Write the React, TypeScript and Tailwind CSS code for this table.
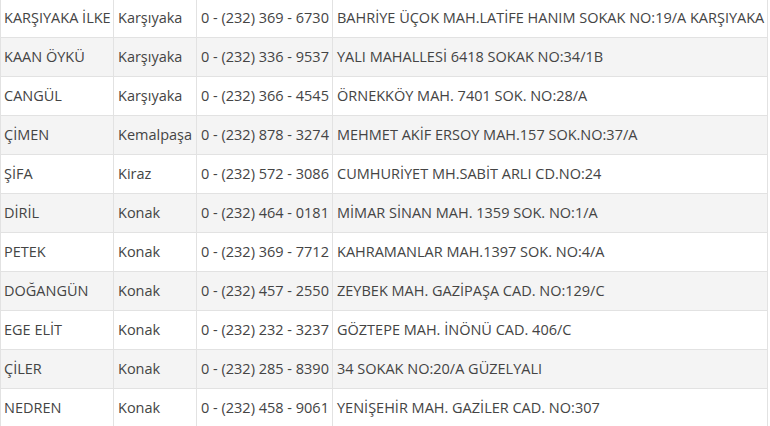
const rows = [
  ["KARŞIYAKA İLKE", "Karşıyaka", "0 - (232) 369 - 6730", "BAHRİYE ÜÇOK MAH.LATİFE HANIM SOKAK NO:19/A KARŞIYAKA"],
  ["KAAN ÖYKÜ", "Karşıyaka", "0 - (232) 336 - 9537", "YALI MAHALLESİ 6418 SOKAK NO:34/1B"],
  ["CANGÜL", "Karşıyaka", "0 - (232) 366 - 4545", "ÖRNEKKÖY MAH. 7401 SOK. NO:28/A"],
  ["ÇİMEN", "Kemalpaşa", "0 - (232) 878 - 3274", "MEHMET AKİF ERSOY MAH.157 SOK.NO:37/A"],
  ["ŞİFA", "Kiraz", "0 - (232) 572 - 3086", "CUMHURİYET MH.SABİT ARLI CD.NO:24"],
  ["DİRİL", "Konak", "0 - (232) 464 - 0181", "MİMAR SİNAN MAH. 1359 SOK. NO:1/A"],
  ["PETEK", "Konak", "0 - (232) 369 - 7712", "KAHRAMANLAR MAH.1397 SOK. NO:4/A"],
  ["DOĞANGÜN", "Konak", "0 - (232) 457 - 2550", "ZEYBEK MAH. GAZİPAŞA CAD. NO:129/C"],
  ["EGE ELİT", "Konak", "0 - (232) 232 - 3237", "GÖZTEPE MAH. İNÖNÜ CAD. 406/C"],
  ["ÇİLER", "Konak", "0 - (232) 285 - 8390", "34 SOKAK NO:20/A GÜZELYALI"],
  ["NEDREN", "Konak", "0 - (232) 458 - 9061", "YENİŞEHİR MAH. GAZİLER CAD. NO:307"],
];

export default function App() {
  return (
    <div className="w-[770px] h-[426px] overflow-hidden bg-white">
      <table
        className="-mt-[2px] w-[768px] table-fixed border-collapse text-[14.5px] text-[#444]"
        style={{ fontFamily: '"Open Sans", "Noto Sans", sans-serif' }}
      >
        <colgroup>
          <col className="w-[113px]" />
          <col className="w-[83px]" />
          <col className="w-[136px]" />
          <col />
        </colgroup>
        <tbody>
          {rows.map((r, i) => (
            <tr key={i} className={i % 2 === 1 ? "bg-[#f4f4f4]" : "bg-white"}>
              {r.map((c, j) => (
                <td
                  key={j}
                  className={`h-[39px] border border-[#e2e2e2] ${j === 0 ? "pl-[3px] pr-[2px]" : "px-[4px]"} whitespace-nowrap overflow-hidden align-middle`}
                >
                  {c}
                </td>
              ))}
            </tr>
          ))}
        </tbody>
      </table>
    </div>
  );
}
